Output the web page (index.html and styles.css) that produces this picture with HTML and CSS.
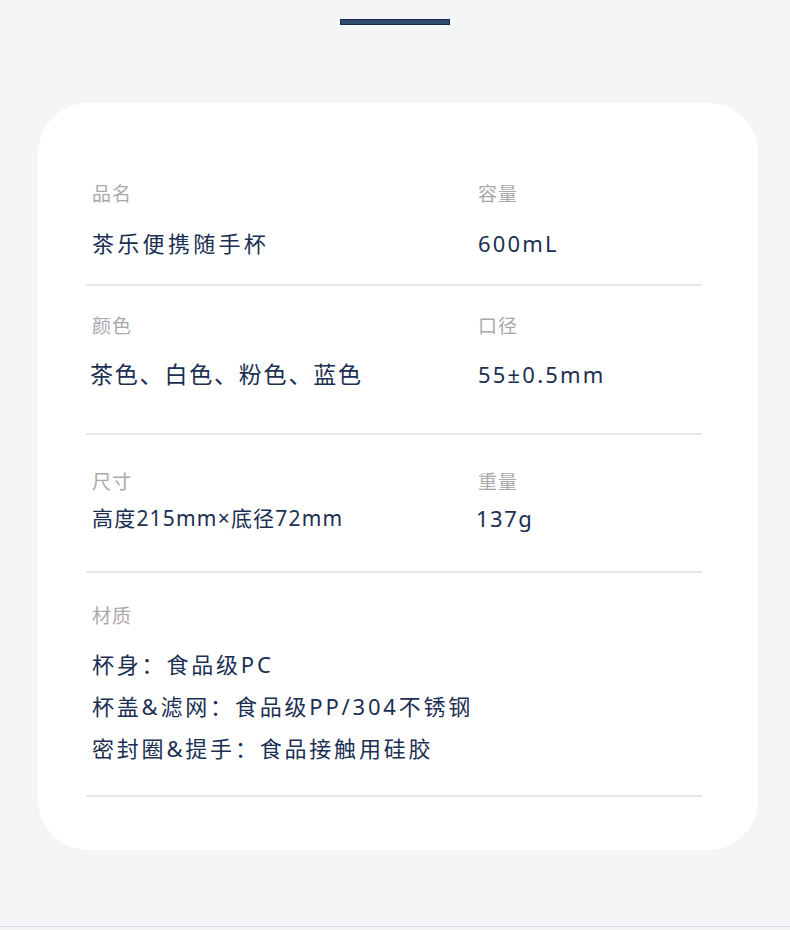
FILE: index.html
```html
<!DOCTYPE html>
<html lang="zh-CN">
<head>
<meta charset="utf-8">
<link rel="stylesheet" href="styles.css">
</head>
<body>
<div class="page">
  <div class="topbar"></div>
  <div class="card">
    <div class="specs">
      <div class="row r1">
        <div class="cell">
          <div class="label">品名</div>
          <div class="value v1">茶乐便携随手杯</div>
        </div>
        <div class="cell">
          <div class="label">容量</div>
          <div class="value v1 latin">600mL</div>
        </div>
      </div>
      <div class="row r2">
        <div class="cell">
          <div class="label">颜色</div>
          <div class="value v2">茶色、白色、粉色、蓝色</div>
        </div>
        <div class="cell">
          <div class="label">口径</div>
          <div class="value v1 latin">55±0.5mm</div>
        </div>
      </div>
      <div class="row r3">
        <div class="cell">
          <div class="label">尺寸</div>
          <div class="value v3">高度215mm×底径72mm</div>
        </div>
        <div class="cell">
          <div class="label">重量</div>
          <div class="value v3 latin">137g</div>
        </div>
      </div>
      <div class="row r4">
        <div class="cell wide">
          <div class="label">材质</div>
          <div class="lines">
            <div class="value v4">杯身：食品级PC</div>
            <div class="value v4">杯盖&amp;滤网：食品级PP/304不锈钢</div>
            <div class="value v4">密封圈&amp;提手：食品接触用硅胶</div>
          </div>
        </div>
      </div>
    </div>
  </div>
</div>
</body>
</html>
```
FILE: styles.css
```css
html, body {
  margin: 0;
  padding: 0;
}
body {
  background: #f4f5f7;
  font-family: "Noto Sans", "Noto Sans CJK SC", sans-serif;
  width: 790px;
  height: 930px;
  overflow: hidden;
}
.page {
  display: flex;
  flex-direction: column;
  align-items: center;
  padding-top: 19px;
  height: 927px;
  box-sizing: border-box;
  border-bottom: 1px solid #ddd9e8;
}
.topbar {
  width: 108px;
  height: 4px;
  background: #2f4d70;
  border: 1px solid #1a2c4b;
}
.card {
  margin-top: 78px;
  margin-left: 6px;
  width: 720px;
  height: 747px;
  background: #ffffff;
  border-radius: 50px;
  box-sizing: border-box;
  padding: 0 56px 0 48px;
}
.specs {
  display: flex;
  flex-direction: column;
}
.row {
  display: grid;
  grid-template-columns: 386px 1fr;
  border-bottom: 2px solid #e8e8ea;
  padding-left: 6px;
}
.cell.wide {
  grid-column: 1 / span 2;
}
.label {
  font-family: "Noto Sans CJK SC", sans-serif;
  font-size: 19px;
  letter-spacing: 1px;
  line-height: 24px;
  color: #a9a9ab;
}
.value {
  color: #1b2f52;
  white-space: nowrap;
}
.v1 {
  font-size: 22px;
  letter-spacing: 3.3px;
}
.v1.latin {
  font-size: 22px;
  letter-spacing: 2.2px;
}
.v2 {
  font-size: 23px;
  letter-spacing: 1.8px;
  margin-left: -2px;
}
.v3 {
  font-size: 21px;
  letter-spacing: 1.2px;
}
.v3.latin {
  font-size: 22px;
  letter-spacing: 1.5px;
  margin-left: -2px;
}
.v4 {
  font-size: 22px;
  letter-spacing: 2.8px;
  line-height: 42px;
}
.r1 {
  padding-top: 78px;
  height: 183px;
  box-sizing: border-box;
}
.r1 .value { margin-top: 22px; line-height: 32px; }
.r2 {
  padding-top: 27px;
  height: 149px;
  box-sizing: border-box;
}
.r2 .value { margin-top: 21px; line-height: 32px; }
.r3 {
  padding-top: 34px;
  height: 138px;
  box-sizing: border-box;
}
.r3 .value { margin-top: 10px; line-height: 30px; }
.r4 {
  padding-top: 30px;
  height: 224px;
  box-sizing: border-box;
}
.r4 .lines { margin-top: 16px; }
```
